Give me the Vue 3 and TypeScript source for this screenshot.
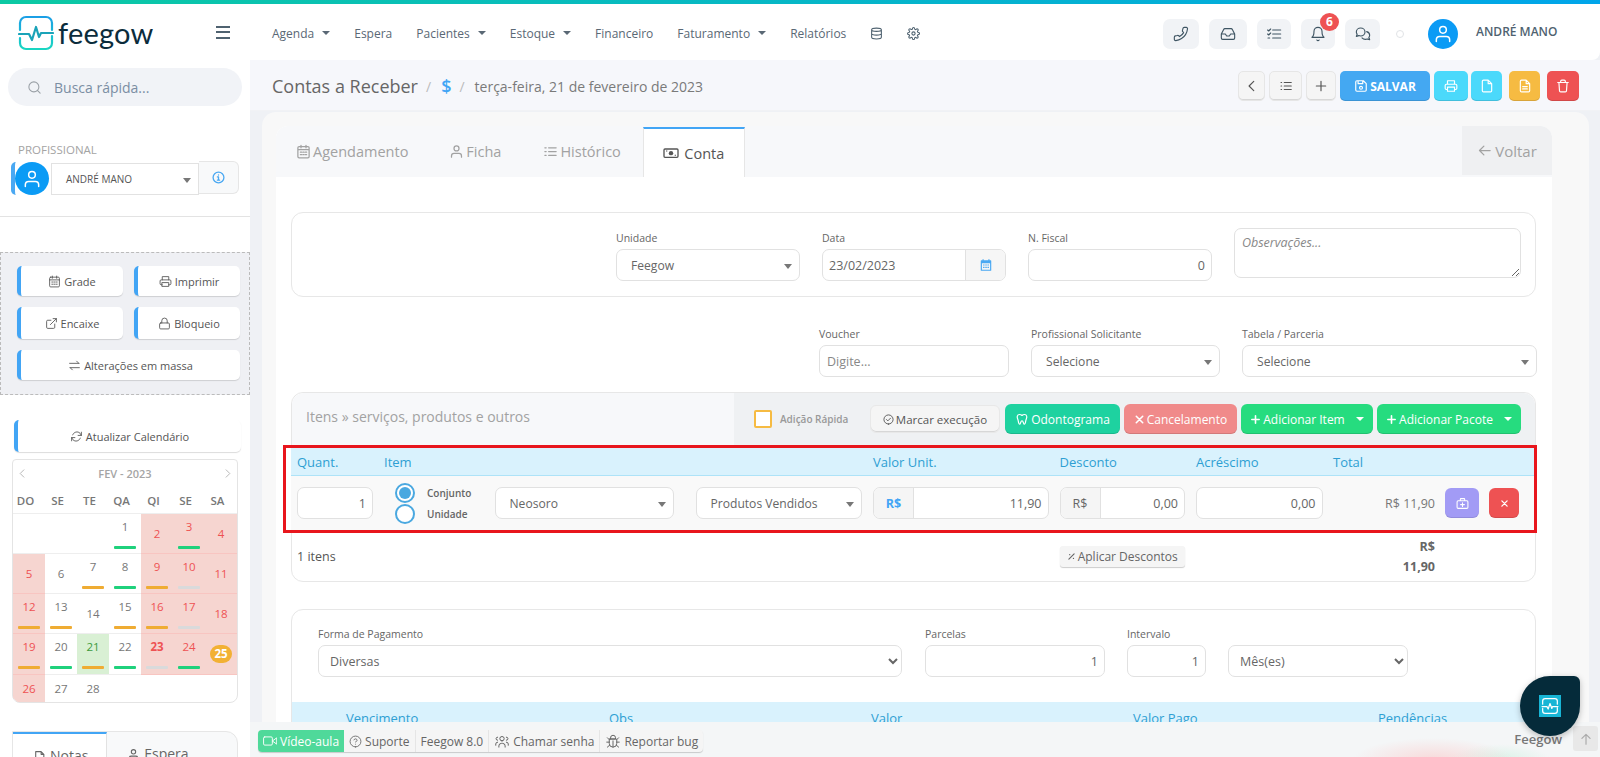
<script setup lang="ts">
interface Cell { d?: number | string; red?: boolean; bar?: string; today?: boolean; bold?: boolean; badge?: boolean }
const ic: Record<string, string> = {
  phone: 'M22 16.9v3a2 2 0 0 1-2.2 2 19.8 19.8 0 0 1-8.6-3 19.5 19.5 0 0 1-6-6 19.8 19.8 0 0 1-3-8.7A2 2 0 0 1 4.1 2h3a2 2 0 0 1 2 1.7c.1 1 .4 1.9.7 2.8a2 2 0 0 1-.5 2.1L8.1 9.9a16 16 0 0 0 6 6l1.3-1.3a2 2 0 0 1 2.1-.4c.9.3 1.8.6 2.8.7a2 2 0 0 1 1.7 2z',
  inbox: 'M22 12h-6l-2 3h-4l-2-3H2M5.5 5.1 2 12v6a2 2 0 0 0 2 2h16a2 2 0 0 0 2-2v-6l-3.5-6.9A2 2 0 0 0 16.8 4H7.2a2 2 0 0 0-1.7 1.1z',
  tasks: 'M10 6h12M10 12h12M10 18h12M2.5 6l1.5 1.5L7 4.5M2.5 12l1.5 1.5L7 10.5M3 18h2.5',
  bell: 'M18 8A6 6 0 0 0 6 8c0 7-3 9-3 9h18s-3-2-3-9M13.7 21a2 2 0 0 1-3.4 0',
  chats: 'M15 9c0 3.3-3 6-6.5 6-1 0-2-.2-2.800-.6L2 15.500l1.200-3.200A5.500 5.500 0 0 1 2 9c0-3.300 3-6 6.500-6S15 5.700 15 9zM17.500 8.500C20 9.200 22 11.300 22 14c0 1.200-.4 2.300-1.200 3.200L22 20.500l-3.800-1.100c-.8.4-1.800.6-2.700.6-2 0-3.800-.9-5-2.200',
  search: 'M11 19a8 8 0 1 0 0-16 8 8 0 0 0 0 16zM21 21l-4.300-4.300',
  user: 'M20 21v-2a4 4 0 0 0-4-4H8a4 4 0 0 0-4 4v2M12 11a4 4 0 1 0 0-8 4 4 0 0 0 0 8z',
  info: 'M12 22a10 10 0 1 0 0-20 10 10 0 0 0 0 20zM12 11v6M10 17h4M10 11h2M12 7v.5',
  cal: 'M5 4h14a2 2 0 0 1 2 2v14a2 2 0 0 1-2 2H5a2 2 0 0 1-2-2V6a2 2 0 0 1 2-2zM8 2v4M16 2v4M3 9h18M7 13h2M11 13h2M15 13h2M7 17h2M11 17h2M15 17h2',
  print: 'M6 9V3h12v6M6 18H4a2 2 0 0 1-2-2v-5a2 2 0 0 1 2-2h16a2 2 0 0 1 2 2v5a2 2 0 0 1-2 2h-2M6 14h12v7H6z',
  ext: 'M18 13v6a2 2 0 0 1-2 2H5a2 2 0 0 1-2-2V8a2 2 0 0 1 2-2h6M15 3h6v6M10 14 21 3',
  lock: 'M5 11h14a2 2 0 0 1 2 2v7a2 2 0 0 1-2 2H5a2 2 0 0 1-2-2v-7a2 2 0 0 1 2-2zM7 11V7a5 5 0 0 1 10 0v4',
  swap: 'M3 8h17M16 4l4 4M21 16H4M8 20l-4-4',
  sync: 'M21 4v6h-6M3 20v-6h6M5 9a8 8 0 0 1 13.500-3L21 10M3 14l2.500 4A8 8 0 0 0 19 15',
  list: 'M9 6h12M9 12h12M9 18h12M3.500 6h1M3.500 12h1M3.500 18h1',
  plus: 'M12 4v16M4 12h16',
  save: 'M19 21H5a2 2 0 0 1-2-2V5a2 2 0 0 1 2-2h11l5 5v11a2 2 0 0 1-2 2zM7 3v5h8V3M12 17.500a2.500 2.500 0 1 0 0-5 2.500 2.500 0 0 0 0 5z',
  file: 'M14 2H6a2 2 0 0 0-2 2v16a2 2 0 0 0 2 2h12a2 2 0 0 0 2-2V8zM14 2v6h6',
  doc: 'M14 2H6a2 2 0 0 0-2 2v16a2 2 0 0 0 2 2h12a2 2 0 0 0 2-2V8zM14 2v6h6M8 13h8M8 17h8',
  trash: 'M3 6h18M8 6V4a2 2 0 0 1 2-2h4a2 2 0 0 1 2 2v2M19 6l-1 14a2 2 0 0 1-2 2H8a2 2 0 0 1-2-2L5 6',
  left: 'M15 4l-8 8 8 8',
  right: 'M9 4l8 8-8 8',
  arrow: 'M21 12H4M11 5l-7 7 7 7',
  up: 'M12 21V4M5 11l7-7 7 7',
  hist: 'M9 6h12M9 12h12M9 18h12M3 6h2M3 12h2M3 18h2',
  check: 'M12 22a10 10 0 1 0 0-20 10 10 0 0 0 0 20zM7.500 12l3 3 6-6',
  tooth: 'M12 6c-2-2-7-3-8 1-1 3 1 5 1.500 8 .3 2 .8 6 2.500 6s1.500-6 4-6 2.300 6 4 6 2.200-4 2.500-6c.5-3 2.500-5 1.500-8-1-4-6-3-8-1z',
  x: 'M5 5l14 14M19 5 5 19',
  pct: 'M19 5 5 19M7 7h.5M17 17h.5',
  med: 'M4 7h16a2 2 0 0 1 2 2v10a2 2 0 0 1-2 2H4a2 2 0 0 1-2-2V9a2 2 0 0 1 2-2zM8 7V4a1 1 0 0 1 1-1h6a1 1 0 0 1 1 1v3M12 10.500v7M8.500 14h7',
  video: 'M23 7l-7 5 7 5zM3 5h11a2 2 0 0 1 2 2v10a2 2 0 0 1-2 2H3a2 2 0 0 1-2-2V7a2 2 0 0 1 2-2z',
  help: 'M12 22a10 10 0 1 0 0-20 10 10 0 0 0 0 20zM9.100 9a3 3 0 0 1 5.800 1c0 2-3 3-3 3M12 17h.01',
  users: 'M17 21v-2a4 4 0 0 0-4-4H11a4 4 0 0 0-4 4v2M12 11a3.500 3.500 0 1 0 0-7 3.500 3.500 0 0 0 0 7zM2 18v-2a3 3 0 0 1 3-3M22 18v-2a3 3 0 0 0-3-3M5 10a2.500 2.500 0 1 1 0-5M19 10a2.500 2.500 0 1 0 0-5',
  bug: 'M8 6a4 4 0 0 1 8 0v2H8zM7 8h10a1 1 0 0 1 1 1v6a6 6 0 0 1-12 0V9a1 1 0 0 1 1-1zM12 11v10M2 13h4M18 13h4M3 6l3 3M21 6l-3 3M3 21l3.500-3M21 21l-3.500-3',
  db: 'M12 8c5 0 9-1.300 9-3s-4-3-9-3-9 1.300-9 3 4 3 9 3zM21 5v14c0 1.700-4 3-9 3s-9-1.300-9-3V5M21 12c0 1.700-4 3-9 3s-9-1.300-9-3',
  gear: 'M12 15a3 3 0 1 0 0-6 3 3 0 0 0 0 6zM19.400 15a1.700 1.700 0 0 0 .3 1.800l.1.100a2 2 0 1 1-2.800 2.800l-.1-.1a1.700 1.700 0 0 0-2.900 1.200V21a2 2 0 0 1-4 0v-.1A1.700 1.700 0 0 0 7 19.700l-.1.100a2 2 0 1 1-2.800-2.800l.1-.1a1.700 1.700 0 0 0-1.200-2.900H3a2 2 0 0 1 0-4h.1A1.700 1.700 0 0 0 4.300 7l-.1-.1A2 2 0 1 1 7 4.100l.1.100a1.700 1.700 0 0 0 1.900.3h.1a1.700 1.700 0 0 0 1-1.500V3a2 2 0 0 1 4 0v.1a1.700 1.700 0 0 0 2.900 1.200l.1-.1a2 2 0 1 1 2.800 2.800l-.1.1a1.700 1.700 0 0 0 1.200 2.900h.1a2 2 0 0 1 0 4h-.1a1.700 1.700 0 0 0-1.500 1z',
  note: 'M5 3h10l5 5v13H5zM15 3v5h5'
};
const nav = [
  { t: 'Agenda', c: true }, { t: 'Espera' }, { t: 'Pacientes', c: true }, { t: 'Estoque', c: true },
  { t: 'Financeiro' }, { t: 'Faturamento', c: true }, { t: 'Relatórios' }
];
const topBtns = [
  { i: 'phone', w: 36, flip: true }, { i: 'inbox', w: 38 }, { i: 'tasks', w: 34 }, { i: 'bell', w: 34, badge: '6' }, { i: 'chats', w: 35 }
];
const G = '#1fd17c', O = '#efac33', S = '#d9dadb';
const weeks: { h: number; cells: Cell[] }[] = [
  { h: 40, cells: [{}, {}, {}, { d: 1, bar: G }, { d: 2, red: true }, { d: 3, red: true, bar: G }, { d: 4, red: true }] },
  { h: 40, cells: [{ d: 5, red: true }, { d: 6 }, { d: 7, bar: O }, { d: 8, bar: G }, { d: 9, red: true, bar: O }, { d: 10, red: true, bar: S }, { d: 11, red: true }] },
  { h: 40, cells: [{ d: 12, red: true, bar: O }, { d: 13, bar: O }, { d: 14 }, { d: 15, bar: O }, { d: 16, red: true, bar: O }, { d: 17, red: true, bar: S }, { d: 18, red: true }] },
  { h: 41, cells: [{ d: 19, red: true, bar: O }, { d: 20, bar: G }, { d: 21, today: true, bar: O }, { d: 22, bar: G }, { d: 23, red: true, bar: S, bold: true }, { d: 24, red: true, bar: G }, { d: 25, red: true, badge: true }] },
  { h: 27, cells: [{ d: 26, red: true }, { d: 27 }, { d: 28 }, {}, {}, {}, {}] }
];
const dows = ['DO', 'SE', 'TE', 'QA', 'QI', 'SE', 'SA'];
</script>

<template>
  <div class="page">
    <div class="topline"></div>
    <header class="header">
      <div class="brand">
        <svg class="logo" viewBox="0 0 36 36" fill="none" stroke="url(#lg)" stroke-width="2.200" stroke-linecap="round" stroke-linejoin="round">
          <defs>
            <linearGradient id="lg" x1="0" y1="0" x2="0" y2="1">
              <stop offset="0" stop-color="#1b9fe6" />
              <stop offset="1" stop-color="#19d6c2" />
            </linearGradient>
          </defs>
          <path d="M2 15V8a6 6 0 0 1 6-6h20a6 6 0 0 1 6 6v7M34 21v7a6 6 0 0 1-6 6H8a6 6 0 0 1-6-6v-5" />
          <path d="M1 19h10l3 6 4-13 3 10 2-4h12" stroke="#1aa3b8" />
        </svg>
        <span class="brand-name">feegow</span>
        <div class="burger"><i></i><i></i><i></i></div>
      </div>
      <nav class="nav">
        <a v-for="n in nav" :key="n.t" class="nav-item">{{ n.t }}<i v-if="n.c" class="caret"></i></a>
        <svg class="ico nav-ic" viewBox="0 0 24 24"><path :d="ic.db" /></svg>
        <svg class="ico nav-ic" viewBox="0 0 24 24"><path :d="ic.gear" /></svg>
      </nav>
      <div class="tools">
        <button v-for="b in topBtns" :key="b.i" class="tool" :style="{ width: b.w + 'px' }">
          <svg class="ico tool-ic" :class="{ flip: b.flip }" viewBox="0 0 24 24"><path :d="ic[b.i]" /></svg>
          <span v-if="b.badge" class="badge">{{ b.badge }}</span>
        </button>
        <i class="status"></i>
        <span class="avatar big"><svg class="ico av-ic" viewBox="0 0 24 24"><path :d="ic.user" /></svg></span>
        <span class="uname">ANDRÉ MANO</span>
      </div>
    </header>

    <div class="body">
      <aside class="side">
        <div class="search">
          <svg class="ico search-ic" viewBox="0 0 24 24"><path :d="ic.search" /></svg>
          <span>Busca rápida...</span>
        </div>
        <div class="prof-label">PROFISSIONAL</div>
        <div class="prof-row">
          <span class="avatar"><svg class="ico av-ic" viewBox="0 0 24 24"><path :d="ic.user" /></svg></span>
          <div class="prof-sel">ANDRÉ MANO<i class="tri"></i></div>
          <div class="prof-info"><svg class="ico info-ic" viewBox="0 0 24 24"><path :d="ic.info" /></svg></div>
        </div>
        <div class="side-rule"></div>
        <div class="dash">
          <button class="sb-btn"><svg class="ico sb-ic" viewBox="0 0 24 24"><path :d="ic.cal" /></svg>Grade</button>
          <button class="sb-btn"><svg class="ico sb-ic" viewBox="0 0 24 24"><path :d="ic.print" /></svg>Imprimir</button>
          <button class="sb-btn tall"><svg class="ico sb-ic" viewBox="0 0 24 24"><path :d="ic.ext" /></svg>Encaixe</button>
          <button class="sb-btn tall"><svg class="ico sb-ic" viewBox="0 0 24 24"><path :d="ic.lock" /></svg>Bloqueio</button>
          <button class="sb-btn wide"><svg class="ico sb-ic" viewBox="0 0 24 24"><path :d="ic.swap" /></svg>Alterações em massa</button>
        </div>
        <button class="sb-btn refresh"><svg class="ico sb-ic" viewBox="0 0 24 24"><path :d="ic.sync" /></svg>Atualizar Calendário</button>
        <div class="cal">
          <div class="cal-head">
            <svg class="ico cal-arrow" viewBox="0 0 24 24"><path :d="ic.left" /></svg>
            <span>FEV - 2023</span>
            <svg class="ico cal-arrow" viewBox="0 0 24 24"><path :d="ic.right" /></svg>
          </div>
          <div class="cal-dows"><span v-for="(d, i) in dows" :key="i">{{ d }}</span></div>
          <div v-for="(w, wi) in weeks" :key="wi" class="cal-week" :style="{ height: w.h + 'px' }">
            <div v-for="(c, ci) in w.cells" :key="ci" class="cal-cell" :class="{ red: c.red, today: c.today, hasbar: c.bar, bold: c.bold }">
              <span v-if="c.badge" class="cal-badge">{{ c.d }}</span>
              <span v-else>{{ c.d }}</span>
              <i v-if="c.bar" class="cal-bar" :style="{ background: c.bar }"></i>
            </div>
          </div>
        </div>
        <div class="side-tabs">
          <div class="side-tab on"><svg class="ico st-ic" viewBox="0 0 24 24"><path :d="ic.note" /></svg>Notas</div>
          <div class="side-tab"><svg class="ico st-ic" viewBox="0 0 24 24"><path :d="ic.user" /></svg>Espera</div>
        </div>
      </aside>

      <main class="main">
        <div class="titlebar">
          <h1>Contas a Receber</h1>
          <span class="slash">/</span>
          <span class="dollar">$</span>
          <span class="slash s2">/</span>
          <span class="crumb">terça-feira, 21 de fevereiro de 2023</span>
          <div class="actions">
            <button class="act light w27"><svg class="ico act-ic" viewBox="0 0 24 24"><path :d="ic.left" /></svg></button>
            <button class="act light w33"><svg class="ico act-ic" viewBox="0 0 24 24"><path :d="ic.list" /></svg></button>
            <button class="act light w30"><svg class="ico act-ic" viewBox="0 0 24 24"><path :d="ic.plus" /></svg></button>
            <button class="act save"><svg class="ico act-ic" viewBox="0 0 24 24"><path :d="ic.save" /></svg>SALVAR</button>
            <button class="act cyan w34"><svg class="ico act-ic" viewBox="0 0 24 24"><path :d="ic.print" /></svg></button>
            <button class="act cyan w31"><svg class="ico act-ic" viewBox="0 0 24 24"><path :d="ic.file" /></svg></button>
            <button class="act yellow w31"><svg class="ico act-ic" viewBox="0 0 24 24"><path :d="ic.doc" /></svg></button>
            <button class="act danger w32"><svg class="ico act-ic" viewBox="0 0 24 24"><path :d="ic.trash" /></svg></button>
          </div>
        </div>

        <div class="outer">
          <div class="inner">
            <div class="tabs">
              <a class="tab t1"><svg class="ico tab-ic" viewBox="0 0 24 24"><path :d="ic.cal" /></svg>Agendamento</a>
              <a class="tab t2"><svg class="ico tab-ic" viewBox="0 0 24 24"><path :d="ic.user" /></svg>Ficha</a>
              <a class="tab t3"><svg class="ico tab-ic" viewBox="0 0 24 24"><path :d="ic.hist" /></svg>Histórico</a>
              <a class="tab active">
                <svg class="money" viewBox="0 0 24 24">
                  <rect x="1.500" y="6" width="21" height="12.500" rx="1.500" fill="none" stroke="#555" stroke-width="2" />
                  <circle cx="12" cy="12.200" r="3.300" fill="#555" />
                  <path d="M4.500 9h2M17.500 15.500h2" stroke="#555" stroke-width="1.600" />
                </svg>Conta
              </a>
              <a class="voltar"><svg class="ico tab-ic" viewBox="0 0 24 24"><path :d="ic.arrow" /></svg>Voltar</a>
            </div>

            <div class="content">
              <section class="card head-card">
                <div class="f w184"><label>Unidade</label><div class="fld sel">Feegow<i class="tri"></i></div></div>
                <div class="f w184">
                  <label>Data</label>
                  <div class="fld grp">
                    <span class="grp-text">23/02/2023</span>
                    <span class="grp-addon"><svg class="cal-blue" viewBox="0 0 24 24"><path fill="#4aa8f2" d="M6 2h2v2h8V2h2v2h2a1 1 0 0 1 1 1v16a1 1 0 0 1-1 1H4a1 1 0 0 1-1-1V5a1 1 0 0 1 1-1h2zM5 9v11h14V9zM7 11h2.500v2H7zM10.800 11h2.500v2h-2.500zM14.500 11H17v2h-2.500zM7 15h2.500v2H7zM10.800 15h2.500v2h-2.500zM14.500 15H17v2h-2.500z" /></svg></span>
                  </div>
                </div>
                <div class="f w184"><label>N. Fiscal</label><div class="fld num">0</div></div>
                <textarea class="obs" placeholder="Observações..."></textarea>
              </section>

              <section class="row2">
                <div class="f"><label>Voucher</label><div class="fld ph">Digite...</div></div>
                <div class="f"><label>Profissional Solicitante</label><div class="fld sel">Selecione<i class="tri"></i></div></div>
                <div class="f"><label>Tabela / Parceria</label><div class="fld sel">Selecione<i class="tri"></i></div></div>
              </section>

              <section class="card items">
                <div class="items-head">
                  <div class="items-title">Itens » serviços, produtos e outros</div>
                  <div class="items-tools">
                    <i class="chk"></i>
                    <span class="chk-label">Adição Rápida</span>
                    <button class="ibtn mark"><svg class="ico ibtn-ic" viewBox="0 0 24 24"><path :d="ic.check" /></svg>Marcar execução</button>
                    <button class="ibtn teal"><svg class="ico ibtn-ic big-ic" viewBox="0 0 24 24"><path :d="ic.tooth" /></svg>Odontograma</button>
                    <button class="ibtn pink"><svg class="ico ibtn-ic thick" viewBox="0 0 24 24"><path :d="ic.x" /></svg>Cancelamento</button>
                    <button class="ibtn green add1"><svg class="ico ibtn-ic thick" viewBox="0 0 24 24"><path :d="ic.plus" /></svg>Adicionar Item<i class="caret white"></i></button>
                    <button class="ibtn green add2"><svg class="ico ibtn-ic thick" viewBox="0 0 24 24"><path :d="ic.plus" /></svg>Adicionar Pacote<i class="caret white"></i></button>
                  </div>
                </div>

                <div class="redbox">
                  <div class="thead">
                    <span class="c1">Quant.</span><span class="c2">Item</span><span class="c3">Valor Unit.</span><span class="c4">Desconto</span><span class="c5">Acréscimo</span><span>Total</span>
                  </div>
                  <div class="trow">
                    <div class="fld num qty">1</div>
                    <div class="radios">
                      <div class="radio"><i class="dot on"></i>Conjunto</div>
                      <div class="radio"><i class="dot"></i>Unidade</div>
                    </div>
                    <div class="fld sel s1">Neosoro<i class="tri"></i></div>
                    <div class="fld sel s2w">Produtos Vendidos<i class="tri"></i></div>
                    <div class="fld grp g1"><span class="addon blue">R$</span><span class="grp-val">11,90</span></div>
                    <div class="fld grp g2"><span class="addon">R$</span><span class="grp-val">0,00</span></div>
                    <div class="fld num g3">0,00</div>
                    <div class="line-total">R$ 11,90</div>
                    <button class="sq purple"><svg class="ico sq-ic" viewBox="0 0 24 24"><path :d="ic.med" /></svg></button>
                    <button class="sq redb"><svg class="ico sq-ic thick" viewBox="0 0 24 24"><path :d="ic.x" /></svg></button>
                  </div>
                </div>

                <div class="items-foot">
                  <span class="count">1 itens</span>
                  <button class="apply"><svg class="ico apply-ic" viewBox="0 0 24 24"><path :d="ic.pct" /></svg>Aplicar Descontos</button>
                  <div class="sum">R$<br />11,90</div>
                </div>
              </section>

              <section class="card pay">
                <div class="pay-row">
                  <div class="f w584"><label>Forma de Pagamento</label><select class="nsel"><option>Diversas</option></select></div>
                  <div class="f w180"><label>Parcelas</label><div class="fld num">1</div></div>
                  <div class="f w79"><label>Intervalo</label><div class="fld num">1</div></div>
                  <div class="f w180 nolabel"><select class="nsel"><option>Mês(es)</option></select></div>
                </div>
                <div class="pay-head">
                  <span class="p1">Vencimento</span><span class="p2">Obs</span><span class="p3">Valor</span><span class="p4">Valor Pago</span><span>Pendências</span>
                </div>
              </section>
            </div>
          </div>
        </div>
      </main>
    </div>

    <footer class="footer">
      <div class="fgroup">
        <a class="fb vid"><svg class="ico fb-ic" viewBox="0 0 24 24"><path :d="ic.video" /></svg>Vídeo-aula</a>
        <a class="fb"><svg class="ico fb-ic" viewBox="0 0 24 24"><path :d="ic.help" /></svg>Suporte</a>
        <a class="fb">Feegow 8.0</a>
        <a class="fb"><svg class="ico fb-ic wide-ic" viewBox="0 0 24 24"><path :d="ic.users" /></svg>Chamar senha</a>
        <a class="fb"><svg class="ico fb-ic wide-ic" viewBox="0 0 24 24"><path :d="ic.bug" /></svg>Reportar bug</a>
      </div>
      <span class="fname">Feegow</span>
      <button class="totop"><svg class="ico top-ic" viewBox="0 0 24 24"><path :d="ic.up" /></svg></button>
    </footer>

    <div class="blob">
      <span class="blob-sq">
        <svg viewBox="0 0 36 36" fill="none" stroke="#fff" stroke-width="2" stroke-linecap="round" stroke-linejoin="round">
          <path d="M6 15V10a4 4 0 0 1 4-4h16a4 4 0 0 1 4 4v5M30 21v5a4 4 0 0 1-4 4H10a4 4 0 0 1-4-4v-4M5 19h8l2 4 3-9 3 8 1-3h9" />
        </svg>
      </span>
    </div>
  </div>
</template>

<style>
html, body { margin: 0; overflow: hidden; }
</style>

<style scoped>
.page { position: relative; width: 1600px; height: 757px; overflow: hidden; background: #eff1f5; font-family: "Open Sans", "Liberation Sans", sans-serif; color: #666; }
.page * { box-sizing: border-box; }
button { font-family: inherit; border: 0; padding: 0; }
.ico { fill: none; stroke: currentColor; stroke-width: 2; stroke-linecap: round; stroke-linejoin: round; flex: none; display: block; }
.thick { stroke-width: 3.500; }
.flip { transform: scaleX(-1); }
.topline { height: 4px; background: linear-gradient(90deg, #0cc9a3, #00a5ea); }

.header { height: 56px; display: flex; align-items: center; background: #fff; border-bottom-right-radius: 8px; position: relative; z-index: 1; }
.brand { width: 272px; flex: none; display: flex; align-items: center; height: 100%; padding-left: 18px; position: relative; }
.logo { width: 36px; height: 36px; flex: none; margin-top: 1px; }
.brand-name { font-family: Lato, sans-serif; font-size: 29px; color: #0b2c3c; margin: 2px 0 0 4px; line-height: 36px; letter-spacing: .2px; }
.burger { margin-left: 63px; width: 14px; display: flex; flex-direction: column; gap: 3.500px; margin-top: 0; }
.burger i { display: block; height: 2px; background: #4f6270; }
.nav { display: flex; align-items: center; gap: 24px; height: 100%; margin-top: 2px; }
.nav-item { display: flex; align-items: center; font-size: 12px; color: #5a6875; white-space: nowrap; }
.caret { width: 0; height: 0; border-left: 4px solid transparent; border-right: 4px solid transparent; border-top: 4px solid #5a6875; margin-left: 8px; display: block; }
.caret.white { border-top-color: #fff; margin-left: 9px; }
.nav-ic { width: 13px; height: 13px; color: #4f6270; }
.tools { margin-left: auto; display: flex; align-items: center; gap: 10px; padding-right: 44px; margin-top: 4px; }
.tool { position: relative; height: 30px; border-radius: 7px; background: #f1f3f6; display: flex; align-items: center; justify-content: center; color: #3f5563; }
.tool-ic { width: 16px; height: 16px; stroke-width: 1.700; }
.badge { position: absolute; top: -6px; right: -4px; width: 19px; height: 18px; border-radius: 50%; background: #ee5253; color: #fff; font-size: 12px; font-weight: 700; line-height: 18px; text-align: center; }
.status { width: 8px; height: 8px; border-radius: 50%; border: 1px solid #e1e3e6; margin: 0 14px 0 6px; display: block; }
.avatar { width: 34px; height: 34px; border-radius: 50%; background: #0b9bf5; display: flex; align-items: center; justify-content: center; color: #fff; flex: none; }
.avatar.big { width: 30px; height: 30px; margin-right: 8px; }
.av-ic { width: 20px; height: 20px; stroke-width: 1.800; }
.uname { font-size: 12px; font-weight: 600; color: #4f6270; width: 80px; white-space: nowrap; margin-top: -5px; }

.body { display: flex; height: 697px; }
.side { width: 250px; flex: none; background: #fff; height: 100%; overflow: hidden; padding-top: 8px; }
.search { height: 38px; margin: 0 8px; border-radius: 19px; background: #f1f3f7; display: flex; align-items: center; padding-left: 19px; font-size: 14px; color: #7b8ea3; }
.search-ic { width: 15px; height: 15px; color: #9aa0a6; margin-right: 12px; stroke-width: 1.700; }
.prof-label { margin: 36px 0 0 18px; font-size: 11.500px; line-height: 16px; color: #a4a4a4; }
.prof-row { margin: 4px 11px 0 11px; height: 33px; display: flex; align-items: center; border-left: 4px solid #4aa8f2; border-radius: 5px; position: relative; }
.prof-row .avatar { margin-left: 0; width: 34px; height: 33px; margin-right: 2px; }
.prof-sel { flex: none; width: 148px; height: 32px; border: 1px solid #e2e2e2; font-size: 10px; color: #555; display: flex; align-items: center; padding-left: 14px; position: relative; background: #fff; }
.tri { position: absolute; right: 7px; top: 50%; margin-top: -1px; width: 0; height: 0; border-left: 4px solid transparent; border-right: 4px solid transparent; border-top: 5px solid #777; display: block; }
.prof-info { width: 40px; height: 33px; border: 1px solid #e6e6e6; border-left: 0; border-radius: 0 6px 6px 0; background: #f8f9fa; display: flex; align-items: center; justify-content: center; color: #4aa8f2; margin-top: -2px; }
.info-ic { width: 13px; height: 13px; stroke-width: 2.400; }
.side-rule { height: 1px; background: #e3e3e3; margin-top: 21px; }
.dash { margin-top: 35px; height: 143px; background: #eff0f4; border: 1px dashed #bbb; display: grid; grid-template-columns: 106px 106px; column-gap: 11px; padding: 13px 0 0 16px; grid-template-rows: 30px 32px 30px; row-gap: 11px; }
.sb-btn { display: flex; align-items: center; justify-content: center; gap: 3px; background: #fff; border-left: 4px solid #42a5f5; border-radius: 5px; box-shadow: 0 1px 1px rgba(0,0,0,.14); font-size: 11px; font-weight: 500; color: #555; }
.sb-ic { width: 13px; height: 13px; stroke-width: 1.600; }
.sb-btn.wide { grid-column: 1 / 3; }
.refresh { width: 227px; height: 32px; margin: 25px 0 0 14px; }
.cal { margin: 7px 0 0 12px; width: 226px; height: 244px; border: 1px solid #e4e4e4; border-radius: 4px 4px 8px 8px; overflow: hidden; background: #fff; }
.cal-head { height: 27px; display: flex; align-items: center; justify-content: space-between; padding: 0 4px; font-size: 11px; font-weight: 600; color: #a5a5a5; }
.cal-arrow { width: 11px; height: 11px; color: #aaa; stroke-width: 1.800; }
.cal-dows { display: grid; grid-template-columns: repeat(7, 1fr); height: 27px; border-bottom: 1px solid #eee; font-size: 11.500px; font-weight: 600; color: #777; align-items: center; }
.cal-dows span { text-align: center; padding-right: 7px; }
.cal-week { display: grid; grid-template-columns: repeat(7, 1fr); border-bottom: 1px solid #eee; }
.cal-week:last-child { border-bottom: 0; }
.cal-cell { display: flex; flex-direction: column; align-items: center; justify-content: center; font-size: 11.500px; line-height: 20px; color: #777; min-width: 0; }
.cal-cell.hasbar { justify-content: flex-start; padding-top: 3px; }
.cal-cell.red { background: #f6d5d0; color: #ee5253; box-shadow: 0 1px 0 #f8c5c1; }
.cal-cell.today { background: #d9f0d4; color: #3d9a3d; }
.cal-cell.bold { font-weight: 700; }
.cal-bar { display: block; width: 22px; height: 3px; border-radius: 1px; margin-top: 9px; }
.cal-badge { width: 22px; height: 18px; line-height: 18px; border-radius: 9px; background: #f2b134; color: #fff; font-weight: 700; text-align: center; }
.side-tabs { margin: 28px 0 0 12px; width: 226px; height: 60px; display: flex; border: 1px solid #e6e6e6; border-radius: 0 12px 0 0; background: #f8f9fa; overflow: hidden; font-size: 14px; color: #666; }
.side-tab { display: flex; gap: 4px; padding: 13px 0 0 20px; width: 131px; align-items: flex-start; line-height: 18px; }
.side-tab.on { width: 95px; background: #fff; border-top: 2px solid #42a5f5; border-right: 1px solid #e2e2e2; }
.st-ic { width: 13px; height: 13px; margin-top: 3px; }

.main { flex: 1; min-width: 0; height: 100%; overflow: hidden; }
.titlebar { height: 51px; background: #f6f7fb; display: flex; align-items: center; padding: 2px 21px 0 22px; border-bottom: 1px solid #f1f2f5; }
h1 { margin: 0; font-size: 18px; font-weight: 400; color: #666; }
.slash { font-size: 14px; color: #bbb; margin-left: 8px; }
.s2 { margin-left: 8px; }
.dollar { color: #42a5f5; font-weight: 600; font-size: 18px; margin-left: 10px; line-height: 20px; }
.crumb { font-size: 14px; color: #7a7a7a; margin-left: 10px; }
.actions { margin-left: auto; display: flex; gap: 4px; }
.act { height: 30px; border-radius: 5px; display: flex; align-items: center; justify-content: center; color: #fff; box-shadow: inset 0 -1px 0 rgba(0,0,0,.12); }
.act-ic { width: 14px; height: 14px; }
.light { background: #f5f5f5; color: #555; border: 1px solid #e6e6e6; }
.w27 { width: 27px; } .w33 { width: 33px; } .w30 { width: 30px; } .w34 { width: 34px; } .w31 { width: 31px; } .w32 { width: 32px; }
.save { width: 90px; background: #44a8f2; font-size: 12px; font-weight: 700; gap: 2px; }
.cyan { background: #4bd9fb; }
.cyan.w31 { margin-left: -1px; }
.yellow { background: #f6bb42; margin-left: 3px; }
.danger { background: #ee5253; margin-left: 3px; }

.outer { margin: 1px 11px 0 12px; background: #f8f8f8; border-radius: 14px 14px 0 0; padding: 14px 37px 0 14px; height: 640px; }
.inner { background: #fff; border-radius: 12px 12px 0 0; height: 100%; }
.tabs { height: 51px; background: #f7f8fa; display: flex; border-radius: 12px 12px 0 0; position: relative; }
.tab { display: flex; align-items: center; gap: 2px; font-size: 14.500px; color: #a2a2a2; white-space: nowrap; }
.tab-ic { width: 15px; height: 15px; stroke-width: 2; }
.t1 { margin-left: 20px; }
.t2 { margin-left: 41px; }
.t3 { margin-left: 42px; }
.active { margin-left: 22px; width: 102px; justify-content: center; background: #fff; color: #555; border-top: 2px solid #42a5f5; border-left: 1px solid #e6e6e6; border-right: 1px solid #e6e6e6; height: 50px; margin-top: 1px; gap: 5px; }
.money { width: 16px; height: 16px; display: block; }
.voltar { margin-left: auto; width: 90px; height: 49px; background: #eff0f2; border-radius: 0 12px 0 0; display: flex; align-items: center; justify-content: center; gap: 3px; font-size: 15px; color: #a2a2a2; }
.voltar .tab-ic { width: 15px; height: 15px; }

.content { padding: 35px 16px 0 15px; }
.card { border: 1px solid #e7e7e7; border-radius: 12px; background: #fff; }
.head-card { height: 85px; display: flex; padding: 15px 0 0 324px; gap: 22px; }
.f { display: flex; flex-direction: column; padding-top: 0; flex: none; }
.f label { font-size: 10.500px; font-weight: 500; color: #666; height: 21px; line-height: 20px; white-space: nowrap; }
.w184 { width: 184px; } .w584 { width: 584px; } .w180 { width: 180px; } .w79 { width: 79px; }
.fld { height: 32px; border: 1px solid #e1e1e1; border-radius: 7px; background: #fff; font-size: 12.500px; color: #666; display: flex; align-items: center; position: relative; white-space: nowrap; }
.sel { padding-left: 14px; font-size: 12.100px; }
.num { justify-content: flex-end; padding-right: 6px; }
.ph { padding-left: 7px; color: #888; }
.grp { overflow: hidden; }
.grp-text { flex: 1; padding-left: 6px; }
.grp-addon { width: 40px; height: 100%; border-left: 1px solid #e1e1e1; background: #f6f6f6; display: flex; align-items: center; justify-content: center; }
.cal-blue { width: 14px; height: 14px; }
.obs { width: 287px; height: 50px; border: 1px solid #e1e1e1; border-radius: 7px; padding: 5px 7px; font-family: inherit; font-size: 12.500px; font-style: normal; outline: none; flex: none; }
.obs::placeholder { color: #888; font-style: italic; opacity: 1; }
.row2 { display: grid; grid-template-columns: 190px 189px 295px; column-gap: 22px; margin: 27px 0 15px 528px; }

.items { height: 190px; }
.items-head { height: 52px; display: flex; border-radius: 12px 12px 0 0; overflow: hidden; }
.items-title { width: 442px; background: #f7f8fa; font-size: 14px; color: #a2a2a2; padding: 0 0 0 14px; line-height: 48px; }
.items-tools { flex: 1; background: #eff1f3; display: flex; align-items: center; padding: 0 0 0 20px; gap: 4px; }
.chk { width: 18px; height: 18px; border: 2px solid #f6bb42; border-radius: 2px; background: #fff; margin-right: 4px; display: block; margin-top: -1px; flex: none; }
.chk-label { width: 86px; font-size: 10px; font-weight: 600; color: #999; flex: none; white-space: nowrap; }
.ibtn { height: 30px; border-radius: 6px; display: flex; align-items: center; justify-content: center; gap: 2px; color: #fff; font-size: 12px; font-weight: 500; white-space: nowrap; box-shadow: inset 0 -1px 0 rgba(0,0,0,.12); flex: none; }
.ibtn-ic { width: 11px; height: 11px; }
.big-ic { width: 14px; height: 14px; }
.mark { width: 130px; height: 28px; background: #f5f5f5; color: #555; border: 1px solid #e8e8e8; font-size: 11.500px; margin-right: 1px; }
.teal { width: 115px; background: #1ed2a0; }
.pink { width: 113px; background: #f08a8a; }
.green { background: #26dc7f; }
.add1 { width: 132px; }
.add2 { width: 144px; }

.redbox { width: 1254px; margin: 0 -1px 0 -9px; height: 88px; border: 3px solid #e8161d; padding-left: 5px; background: #fff; position: relative; }
.thead { height: 28px; background: #d9f2fd; border-bottom: 1px solid #aee3f8; display: flex; align-items: center; padding-left: 6px; font-size: 13px; font-weight: 500; color: #2e9fd3; white-space: nowrap; }
.c1 { width: 87px; } .c2 { width: 489px; } .c3 { width: 186.500px; } .c4 { width: 136.500px; } .c5 { width: 137px; }
.trow { height: 54px; background: #f9f9f9; display: flex; align-items: center; padding-left: 6px; }
.qty { width: 76px; flex: none; }
.radios { width: 121.500px; flex: none; padding-left: 22px; display: flex; flex-direction: column; gap: 1px; }
.radio { display: flex; align-items: center; gap: 12px; height: 20px; font-size: 10px; font-weight: 600; color: #666; }
.dot { width: 20px; height: 20px; border-radius: 50%; border: 2px solid #4aa8e0; display: flex; align-items: center; justify-content: center; background: #fff; }
.dot.on::after { content: ""; width: 12px; height: 12px; border-radius: 50%; background: #4aa8e0; }
.s1 { width: 179.500px; flex: none; margin-right: 21.500px; }
.s2w { width: 166.500px; flex: none; margin-right: 11px; }
.g1 { width: 175.500px; flex: none; margin-right: 11px; }
.g2 { width: 125.500px; flex: none; margin-right: 10.500px; }
.g3 { width: 127px; flex: none; }
.addon { width: 40px; height: 100%; flex: none; display: flex; align-items: center; justify-content: center; background: #f5f5f5; border-right: 1px solid #e1e1e1; color: #666; }
.addon.blue { color: #42a5f5; font-weight: 700; }
.grp-val { flex: 1; text-align: right; padding-right: 6px; }
.line-total { width: 112.500px; flex: none; text-align: right; font-size: 12.500px; color: #777; }
.sq { height: 30px; border-radius: 6px; display: flex; align-items: center; justify-content: center; color: #fff; flex: none; box-shadow: inset 0 -1px 0 rgba(0,0,0,.1); }
.purple { width: 34px; background: #a29bf5; margin-left: 10px; }
.redb { width: 30px; background: #ee5253; margin-left: 10px; }
.sq-ic { width: 13px; height: 13px; }
.sq-ic.thick { width: 9px; height: 9px; }
.items-foot { display: flex; align-items: center; height: 47px; padding-left: 5px; }
.count { width: 762.500px; flex: none; font-size: 12.500px; color: #555; font-weight: 500; }
.apply { width: 125.500px; height: 21px; background: #f5f5f5; border-radius: 3px; box-shadow: 0 1px 1px rgba(0,0,0,.2); font-size: 12px; color: #666; display: flex; align-items: center; justify-content: center; gap: 2px; }
.apply-ic { width: 9px; height: 9px; stroke-width: 3; }
.sum { width: 250px; text-align: right; font-size: 12.500px; font-weight: 700; color: #666; line-height: 20px; }

.pay { margin-top: 27px; height: 200px; overflow: hidden; border-radius: 12px 12px 0 0; }
.pay-row { display: flex; gap: 22px; padding: 14px 0 0 26px; height: 92px; }
.pay-row .w584 { margin-right: 1px; }
.nsel { height: 32px; border: 1px solid #e1e1e1; border-radius: 7px; background: #fff; font-family: inherit; font-size: 12.500px; color: #666; padding-left: 7px; width: 100%; }
.nolabel { padding-top: 21px; }
.pay-head { background: #d9f2fd; height: 50px; padding: 7px 0 0 54px; display: flex; font-size: 13px; font-weight: 500; color: #2e9fd3; }
.p1 { width: 263px; } .p2 { width: 262px; } .p3 { width: 262px; } .p4 { width: 245px; }

.footer { position: absolute; left: 250px; right: 0; bottom: 0; height: 35px; display: flex; align-items: center; background:
  radial-gradient(ellipse 80px 22px at 1183px 38px, rgba(250,205,205,.7), transparent),
  radial-gradient(ellipse 50px 16px at 1250px 38px, rgba(200,240,220,.6), transparent),
  #f4f6f7; padding: 8px 2px 5px 8px; z-index: 3; }
.fgroup { display: flex; height: 22px; border-radius: 4px; background: #f5f5f5; box-shadow: 0 1px 1px rgba(0,0,0,.18); }
.fb { display: flex; align-items: center; gap: 3px; font-size: 12px; color: #666; padding: 0 5px; border-right: 1px solid #e5e5e5; white-space: nowrap; }
.fb:last-child { border-right: 0; }
.fb.vid { background: #4fd99a; color: #fff; border-radius: 4px 0 0 4px; border-right: 0; }
.fb-ic { width: 13px; height: 13px; stroke-width: 1.600; }
.wide-ic { width: 16px; height: 15px; }
.vid .fb-ic { width: 14px; height: 14px; }
.fname { margin-left: auto; font-size: 13px; font-weight: 600; color: #777; margin: -4px 11px 0 auto; }
.totop { width: 25px; height: 25px; background: #e8e8e8; border-radius: 3px; display: flex; align-items: center; justify-content: center; color: #aaa; margin-top: -5px; }
.top-ic { width: 14px; height: 14px; }
.blob { position: absolute; left: 1520px; top: 676px; width: 60px; height: 60px; background: #052b3a; border-radius: 50% 6px 50% 50%; display: flex; align-items: center; justify-content: center; z-index: 4; box-shadow: 0 2px 6px rgba(0,0,0,.25); }
.blob-sq { width: 22px; height: 22px; background: #18b5d5; display: block; }
.blob-sq svg { display: block; width: 22px; height: 22px; }
</style>
